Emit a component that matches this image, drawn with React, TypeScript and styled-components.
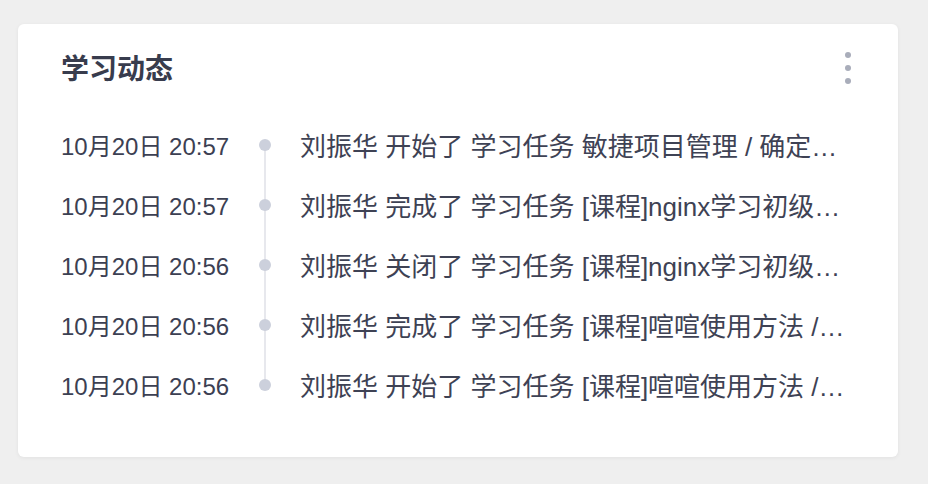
import React from 'react';
import styled, { createGlobalStyle } from 'styled-components';

const GlobalStyle = createGlobalStyle`
  html, body {
    margin: 0;
    padding: 0;
    background: #efefef;
  }
  body {
    font-family: "Liberation Sans", "Noto Sans CJK SC", sans-serif;
    -webkit-font-smoothing: antialiased;
  }
`;

const Page = styled.div`
  padding: 24px 30px 27px 18px;
`;

const Card = styled.section`
  background: #ffffff;
  border-radius: 6px;
  box-shadow: 0 1px 4px rgba(0, 0, 0, 0.06);
  padding: 28px 47px 43px 43px;
`;

const Header = styled.div`
  display: flex;
  align-items: center;
  justify-content: space-between;
  height: 36px;
`;

const Title = styled.h2`
  margin: 0;
  font-size: 28px;
  line-height: 36px;
  font-weight: 700;
  color: #383c4d;
`;

const MenuButton = styled.button`
  display: flex;
  align-items: center;
  justify-content: center;
  width: 6px;
  height: 34px;
  padding: 0;
  border: 0;
  background: none;
  cursor: pointer;
  color: #a9adba;
  margin-top: -5px;
`;

const List = styled.ul`
  list-style: none;
  margin: 26px 0 0;
  padding: 0;
`;

const Row = styled.li<{ $last: boolean }>`
  display: flex;
  align-items: center;
  height: 60px;
  position: relative;

  &::after {
    content: '';
    display: ${p => (p.$last ? 'none' : 'block')};
    position: absolute;
    left: 203px;
    top: 31px;
    width: 2px;
    height: 60px;
    background: #e7e8ed;
  }
`;

const Time = styled.span`
  flex: 0 0 198px;
  font-size: 24px;
  color: #3c4052;
  white-space: nowrap;
`;

const Dot = styled.span`
  flex: 0 0 12px;
  height: 12px;
  border-radius: 50%;
  background: #ccd0dc;
  position: relative;
  z-index: 1;
  margin-top: 2px;
`;

const Text = styled.span`
  flex: 1;
  min-width: 0;
  margin-left: 29px;
  font-size: 26px;
  color: #3e4254;
  white-space: nowrap;
  overflow: hidden;
  text-overflow: ellipsis;
`;

const items = [
  { time: '10月20日 20:57', text: '刘振华 开始了 学习任务 敏捷项目管理 / 确定项目目标' },
  { time: '10月20日 20:57', text: '刘振华 完成了 学习任务 [课程]nginx学习初级篇 / 第一课' },
  { time: '10月20日 20:56', text: '刘振华 关闭了 学习任务 [课程]nginx学习初级篇 / 第一课' },
  { time: '10月20日 20:56', text: '刘振华 完成了 学习任务 [课程]喧喧使用方法 / 入门' },
  { time: '10月20日 20:56', text: '刘振华 开始了 学习任务 [课程]喧喧使用方法 / 入门' },
];

export default function App() {
  return (
    <>
      <GlobalStyle />
      <Page>
        <Card>
          <Header>
            <Title>学习动态</Title>
            <MenuButton aria-label="更多">
              <svg width="6" height="32" viewBox="0 0 6 32" fill="currentColor">
                <circle cx="3" cy="3" r="3" />
                <circle cx="3" cy="16" r="3" />
                <circle cx="3" cy="29" r="3" />
              </svg>
            </MenuButton>
          </Header>
          <List>
            {items.map((item, i) => (
              <Row key={i} $last={i === items.length - 1}>
                <Time>{item.time}</Time>
                <Dot />
                <Text>{item.text}</Text>
              </Row>
            ))}
          </List>
        </Card>
      </Page>
    </>
  );
}
